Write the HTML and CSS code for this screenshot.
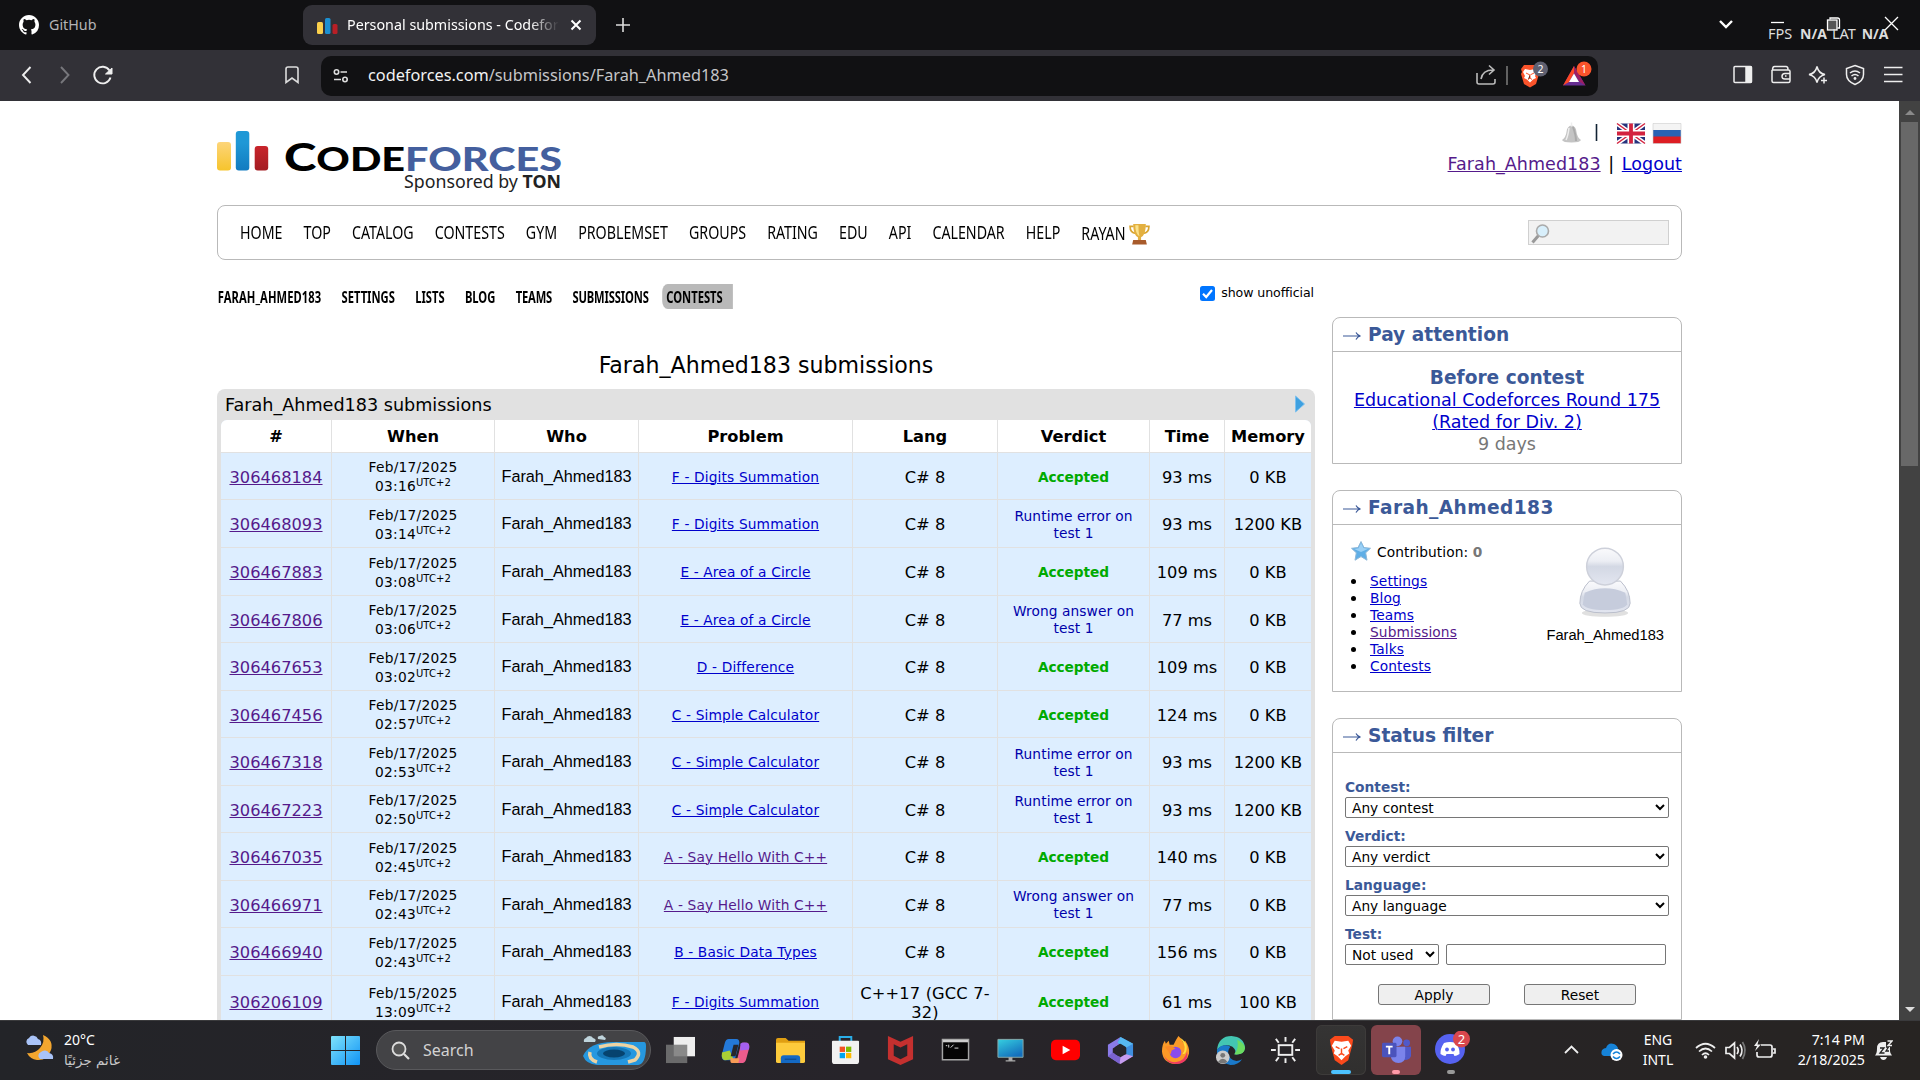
FILE: index.html
```html
<!DOCTYPE html>
<html lang="en">
<head>
<meta charset="utf-8">
<title>Personal submissions - Codeforces</title>
<link rel="stylesheet" href="styles.css">
</head>
<body>
<div class="tabs">
  <svg class="gh" viewBox="0 0 16 16"><path fill="#fff" d="M8 0C3.58 0 0 3.58 0 8c0 3.54 2.29 6.53 5.47 7.59.4.07.55-.17.55-.38 0-.19-.01-.82-.01-1.49-2.01.37-2.53-.49-2.69-.94-.09-.23-.48-.94-.82-1.13-.28-.15-.68-.52-.01-.53.63-.01 1.08.58 1.23.82.72 1.21 1.87.87 2.33.66.07-.52.28-.87.51-1.07-1.78-.2-3.64-.89-3.64-3.95 0-.87.31-1.59.82-2.15-.08-.2-.36-1.02.08-2.12 0 0 .67-.21 2.2.82a7.6 7.6 0 0 1 4 0c1.53-1.04 2.2-.82 2.2-.82.44 1.1.16 1.92.08 2.12.51.56.82 1.27.82 2.15 0 3.07-1.87 3.75-3.65 3.95.29.25.54.73.54 1.48 0 1.07-.01 1.93-.01 2.2 0 .21.15.46.55.38A8 8 0 0 0 16 8c0-4.42-3.58-8-8-8z"/></svg>
  <span class="tab-label">GitHub</span>
  <div class="tab">
    <svg class="fav" viewBox="0 0 21 17"><rect y="4" width="6" height="12" rx="1.5" fill="#fbd04b"/><rect x="8" width="5.500" height="16" rx="1.500" fill="#1c8fd0"/><rect x="15.500" y="6" width="5" height="10" rx="1.500" fill="#b81f26"/></svg>
    <span class="tab-title">Personal submissions - Codefor</span>
    <svg class="x" viewBox="0 0 12 12"><path d="M1.500 1.500l9 9m0-9l-9 9" stroke="#fff" stroke-width="2"/></svg>
  </div>
  <svg class="plus" viewBox="0 0 14 14"><path d="M7 0v14M0 7h14" stroke="#ddd" stroke-width="1.600"/></svg>
  <svg class="caps" viewBox="0 0 190 30"><g fill="none" stroke="#fff" stroke-width="1.300"><path d="M6 11l6 6 6-6" stroke-width="2.400"/><path d="M57 12.500h13"/><path d="M116 9.500V8h7.500q2 0 2 2v8h-2"/><rect x="113.500" y="10" width="9.500" height="10" fill="#555"/><path d="M171 7l13 13m0-13l-13 13"/></g></svg>
  <div class="fps">FPS <b>N/A</b><span>LAT</span> <b>N/A</b></div>
</div>
<div class="toolbar">
  <svg class="navi" viewBox="0 0 100 24"><g fill="none" stroke-width="1.900"><path d="M9.500 4l-7.500 8 7.500 8" stroke="#eee"/><path d="M40 4l7.500 8-7.500 8" stroke="#77777c"/><path d="M88.500 7.500a8.300 8.300 0 1 0 1 7" stroke="#eee"/></g><path d="M91 5v6h-6.500z" fill="#eee" stroke="#eee"/></svg>
  <svg class="bm" viewBox="0 0 14 18"><path d="M3 1h8q2 0 2 2v13.500l-6-4.500-6 4.500V3q0-2 2-2z" fill="none" stroke="#ddd" stroke-width="1.600"/></svg>
  <div class="url">
    <svg class="tune" viewBox="0 0 16 16"><g fill="none" stroke="#ddd" stroke-width="1.600"><circle cx="3.500" cy="4" r="2.200"/><path d="M7.500 4H14M1 11.500h7"/><circle cx="12" cy="11.500" r="2.200"/></g></svg>
    <span class="addr">codeforces.com<i>/submissions/Farah_Ahmed183</i></span>
    <svg class="urlicons" viewBox="0 0 122 30"><g fill="none" stroke="#bbb" stroke-width="1.600"><path d="M1 12v9q0 2 2 2h14q2 0 2-2v-3"/><path d="M5 18c1-6 5-9 12-9M13 4.500l5 4.500-5 4.500"/><path d="M31 5v19" stroke="#777"/></g>
      <path fill="#fb542b" d="M48 4h12l3 4-1 3 1 2-3 10-6 3.500L48 23l-3-10 1-2-1-3z"/><path fill="#fff" d="M49 8l5 1 5-1 2 3-2 4 1 2-3 1.500-3 3-3-3-3-1.500 1-2-2-4z"/><path d="M50 12l3 1.500M58 12l-3 1.500M54 13v4l-2 1.500M54 17l2 1.500" stroke="#fb542b"/>
      <circle cx="64.500" cy="8" r="7.500" fill="#5f6070"/><text x="64.500" y="12" text-anchor="middle" font-size="10.500" fill="#fff">2</text>
      <path d="M98 5l11.500 19.500H87z" fill="#662d91"/><path d="M98 5L87 24.500l6-3.500 5-9z" fill="#ff4724"/><path d="M98 5v7l6 9 5.500 3.500z" fill="#9e1f63"/><path d="M98 12.500l5 8.500h-10z" fill="#fff"/>
      <circle cx="108" cy="8" r="7.500" fill="#fb542b"/><text x="108" y="11.800" text-anchor="middle" font-size="10.500" fill="#fff">1</text></svg>
  </div>
  <svg class="tools" viewBox="0 0 172 22"><g fill="none" stroke="#eee" stroke-width="1.500"><rect x="1" y="2.500" width="17.500" height="16" rx="1"/><path d="M13 3h5v15h-5z" fill="#eee"/><path d="M39 6V17q0 1.500 1.500 1.500h15q1.500 0 1.500-1.500V7.500q0-1.500-1.500-1.500H39.500q0-3.500 2-3.500H53q2 0 2 3"/><path d="M57 9.500h-5q-3 0-3 2.800t3 2.700h5M52 12h1.500"/><path d="M84 2.500q1.500 7 8 8-6.500 1.500-8 8-1.500-6.500-8-8 6.500-1 8-8z"/><path d="M91 13.500v6M88 16.500h6"/><path d="M122 1.500l8.500 3v6q0 6.500-8.500 10-8.500-3.500-8.500-10v-6z"/><path d="M117 9q5-4 10 0M118.500 12q3.500-3 7 0"/><path d="M151 3.500h18.500M151 10.500h18.500M151 17.500h18.500"/></g><circle cx="122" cy="14.500" r="1.400" fill="#eee"/></svg>
</div>
<div class="view">
<div class="page">
  <header class="head">
    <svg class="logo" viewBox="0 0 350 70"><defs><linearGradient id="y" x2="0" y2="1"><stop stop-color="#fdd57a"/><stop offset="1" stop-color="#f6c42c"/></linearGradient><linearGradient id="b" x2="0" y2="1"><stop offset=".3" stop-color="#1f98d6"/><stop offset="1" stop-color="#127bc0"/></linearGradient><linearGradient id="r" x2="0" y2="1"><stop stop-color="#c8242b"/><stop offset="1" stop-color="#a31c22"/></linearGradient></defs>
      <rect y="12" width="14" height="28.500" rx="3" fill="url(#y)"/><rect x="18.800" y="1" width="13.500" height="39.500" rx="3" fill="url(#b)"/><rect x="37.700" y="16" width="13.500" height="24.500" rx="3" fill="url(#r)"/>
      <text class="word" x="67" y="40.500" font-size="32" textLength="278" lengthAdjust="spacingAndGlyphs"><tspan font-size="38">C</tspan>ODE<tspan fill="#445f9e">FORCES</tspan></text>
      <text x="187" y="57.500" font-size="17.500" class="spons" textLength="157" lengthAdjust="spacingAndGlyphs" fill="#222">Sponsored by <tspan font-weight="700">TON</tspan></text></svg>
    <div class="user">
      <svg class="flags" viewBox="0 0 122 24"><path d="M1 19q4-3 4.500-8Q6 5 10.500 4.500 15 5 15.500 11q.5 5 4.500 8-1 2.500-9.500 2.500T1 19z" fill="#c4c4c4"/><path d="M10.500 1.500v4M8 7q-1 8-3 12" stroke="#eee" stroke-width="1.500" fill="none"/><path d="M12 6q3 8 3 14" stroke="#aaa" stroke-width="2" fill="none"/><path d="M35.500 3v17" stroke="#123" stroke-width="1.600"/>
        <rect x="56" y="2.500" width="28" height="20" fill="#27327c"/><path d="M56 2.500l28 20m0-20l-28 20" stroke="#fff" stroke-width="4.500"/><path d="M56 2.500l28 20m0-20l-28 20" stroke="#d3233f" stroke-width="1.500"/><path d="M70 2.500v20M56 12.500h28" stroke="#fff" stroke-width="7"/><path d="M70 2.500v20M56 12.500h28" stroke="#d3233f" stroke-width="3.800"/>
        <path d="M92 2.500h28v7H92z" fill="#f4f4f4"/><path d="M92 9h28v7H92z" fill="#2a62b4"/><path d="M92 15.500h28v7H92z" fill="#dd1d23"/><path d="M92 2.500h28v20H92z" fill="none" stroke="#ccc" stroke-width=".6"/></svg>
      <div class="who"><a class="v">Farah_Ahmed183</a> | <a>Logout</a></div>
    </div>
  </header>
  <nav class="menu">
    <div class="items"><span>HOME</span><span>TOP</span><span>CATALOG</span><span>CONTESTS</span><span>GYM</span><span>PROBLEMSET</span><span>GROUPS</span><span>RATING</span><span>EDU</span><span>API</span><span>CALENDAR</span><span>HELP</span><span class="low">RAYAN</span></div>
    <svg class="cup" viewBox="0 0 20 20" preserveAspectRatio="none"><path d="M4.500 3H1q0 6 5.500 6.500M15.500 3H19q0 6-5.500 6.500" fill="none" stroke="#d9a531" stroke-width="1.600"/><path d="M4 1h12q0 10-4.500 12v3h-3v-3Q4 11 4 1z" fill="#e3b040"/><path d="M6 2h3q0 7 1 10-4-2-4-10z" fill="#fbe28a"/><path d="M4 15.500h12l1 4H3z" fill="#a85b2b"/></svg>
    <div class="find"><svg viewBox="0 0 20 20"><path d="M1.500 19l6-7" stroke="#999" stroke-width="3"/><circle cx="11.500" cy="7.500" r="6" fill="#d8effb" stroke="#aaa" stroke-width="1.600"/></svg></div>
  </nav>
  <div class="cols">
  <main>
    <div class="sub">
      <div class="items2"><span class="wide">FARAH_AHMED183</span><span>SETTINGS</span><span>LISTS</span><span>BLOG</span><span class="tight">TEAMS</span><span class="tight">SUBMISSIONS</span><span class="on">CONTESTS</span></div>
      <label class="unoff"><svg viewBox="0 0 15 15"><rect width="15" height="15" rx="2.500" fill="#0075ff"/><path d="M3 7.800l3.200 3.200L12 4" fill="none" stroke="#fff" stroke-width="2.200"/></svg><span>show unofficial</span></label>
    </div>
    <h1>Farah_Ahmed183 submissions</h1>
    <section class="data">
      <div class="cap"><span>Farah_Ahmed183 submissions</span><svg viewBox="0 0 10 18"><path d="M.5 1L9.500 9 .5 17z" fill="#3ea0e0" stroke="#7cc0ee"/></svg></div>
      <table>
        <colgroup><col class="c1"><col class="c2"><col class="c3"><col class="c4"><col class="c5"><col class="c6"><col class="c7"><col class="c8"></colgroup>
        <thead><tr><th>#</th><th>When</th><th>Who</th><th>Problem</th><th>Lang</th><th>Verdict</th><th>Time</th><th>Memory</th></tr></thead>
        <tbody>
        <tr><td><a class="v">306468184</a></td><td class="d">Feb/17/2025<br>03:16<sup>UTC+2</sup></td><td class="w">Farah_Ahmed183</td><td class="p"><a>F - Digits Summation</a></td><td>C# 8</td><td class="ok">Accepted</td><td>93 ms</td><td>0 KB</td></tr>
        <tr><td><a class="v">306468093</a></td><td class="d">Feb/17/2025<br>03:14<sup>UTC+2</sup></td><td class="w">Farah_Ahmed183</td><td class="p"><a>F - Digits Summation</a></td><td>C# 8</td><td class="no">Runtime error on<br>test 1</td><td>93 ms</td><td>1200 KB</td></tr>
        <tr><td><a class="v">306467883</a></td><td class="d">Feb/17/2025<br>03:08<sup>UTC+2</sup></td><td class="w">Farah_Ahmed183</td><td class="p"><a>E - Area of a Circle</a></td><td>C# 8</td><td class="ok">Accepted</td><td>109 ms</td><td>0 KB</td></tr>
        <tr><td><a class="v">306467806</a></td><td class="d">Feb/17/2025<br>03:06<sup>UTC+2</sup></td><td class="w">Farah_Ahmed183</td><td class="p"><a>E - Area of a Circle</a></td><td>C# 8</td><td class="no">Wrong answer on<br>test 1</td><td>77 ms</td><td>0 KB</td></tr>
        <tr><td><a class="v">306467653</a></td><td class="d">Feb/17/2025<br>03:02<sup>UTC+2</sup></td><td class="w">Farah_Ahmed183</td><td class="p"><a>D - Difference</a></td><td>C# 8</td><td class="ok">Accepted</td><td>109 ms</td><td>0 KB</td></tr>
        <tr><td><a class="v">306467456</a></td><td class="d">Feb/17/2025<br>02:57<sup>UTC+2</sup></td><td class="w">Farah_Ahmed183</td><td class="p"><a>C - Simple Calculator</a></td><td>C# 8</td><td class="ok">Accepted</td><td>124 ms</td><td>0 KB</td></tr>
        <tr><td><a class="v">306467318</a></td><td class="d">Feb/17/2025<br>02:53<sup>UTC+2</sup></td><td class="w">Farah_Ahmed183</td><td class="p"><a>C - Simple Calculator</a></td><td>C# 8</td><td class="no">Runtime error on<br>test 1</td><td>93 ms</td><td>1200 KB</td></tr>
        <tr><td><a class="v">306467223</a></td><td class="d">Feb/17/2025<br>02:50<sup>UTC+2</sup></td><td class="w">Farah_Ahmed183</td><td class="p"><a>C - Simple Calculator</a></td><td>C# 8</td><td class="no">Runtime error on<br>test 1</td><td>93 ms</td><td>1200 KB</td></tr>
        <tr><td><a class="v">306467035</a></td><td class="d">Feb/17/2025<br>02:45<sup>UTC+2</sup></td><td class="w">Farah_Ahmed183</td><td class="p"><a class="v">A - Say Hello With C++</a></td><td>C# 8</td><td class="ok">Accepted</td><td>140 ms</td><td>0 KB</td></tr>
        <tr><td><a class="v">306466971</a></td><td class="d">Feb/17/2025<br>02:43<sup>UTC+2</sup></td><td class="w">Farah_Ahmed183</td><td class="p"><a class="v">A - Say Hello With C++</a></td><td>C# 8</td><td class="no">Wrong answer on<br>test 1</td><td>77 ms</td><td>0 KB</td></tr>
        <tr><td><a class="v">306466940</a></td><td class="d">Feb/17/2025<br>02:43<sup>UTC+2</sup></td><td class="w">Farah_Ahmed183</td><td class="p"><a>B - Basic Data Types</a></td><td>C# 8</td><td class="ok">Accepted</td><td>156 ms</td><td>0 KB</td></tr>
        <tr class="tall"><td><a class="v">306206109</a></td><td class="d">Feb/15/2025<br>13:09<sup>UTC+2</sup></td><td class="w">Farah_Ahmed183</td><td class="p"><a>F - Digits Summation</a></td><td class="l">C++17 (GCC 7-<br>32)</td><td class="ok">Accepted</td><td>61 ms</td><td>100 KB</td></tr>
        </tbody>
      </table>
    </section>
  </main>
  <aside>
    <section class="box b1"><h2><svg viewBox="0 0 19 10"><path d="M0 5h17M13 1.500q1.500 3 4.500 3.500-3 .5-4.500 3.500" fill="none" stroke="#3b5998" stroke-width="1.200"/></svg>Pay attention</h2>
      <div class="soon"><b>Before contest</b><a>Educational Codeforces Round 175</a><a>(Rated for Div. 2)</a><span>9 days</span></div></section>
    <section class="box b2"><h2><svg viewBox="0 0 19 10"><path d="M0 5h17M13 1.500q1.500 3 4.500 3.500-3 .5-4.500 3.500" fill="none" stroke="#3b5998" stroke-width="1.200"/></svg><span class="name">Farah_Ahmed183</span></h2>
      <div class="prof"><div>
        <p><svg viewBox="0 0 20 20"><path d="M10 .5l3 6 6.500.8-4.800 4.500 1.300 7.400-6-3.600-6 3.600 1.300-7.400L.5 7.300 7 6.500z" fill="#5faee6" stroke="#8fb8d8"/><path d="M10 2l2.500 5 5 .8L10 11 3 8l4.500-.8z" fill="#9bd0f5"/></svg>Contribution: <b>0</b></p>
        <ul><li><a>Settings</a></li><li><a>Blog</a></li><li><a>Teams</a></li><li><a class="v">Submissions</a></li><li><a>Talks</a></li><li><a>Contests</a></li></ul></div>
        <figure><svg viewBox="0 0 60 76"><defs><linearGradient id="g" x2="0" y2="1"><stop stop-color="#fafafc"/><stop offset=".35" stop-color="#eceef4"/><stop offset=".5" stop-color="#d3d8e4"/><stop offset="1" stop-color="#e3e6f0"/></linearGradient></defs><ellipse cx="30" cy="69" rx="24" ry="4" fill="#ccc" opacity=".6"/><path d="M14 36q-10 10-10 23 0 10 26 10t26-10q0-13-10-23z" fill="url(#g)" stroke="#b9bdca"/><path d="M9 48q21-9 42 0l2 12q-3 6-23 6T7 60z" fill="#c6ccdc"/><circle cx="30" cy="21" r="19" fill="url(#g)" stroke="#cdd0da" stroke-width="1.500"/></svg><figcaption>Farah_Ahmed183</figcaption></figure></div></section>
    <section class="box b3"><h2><svg viewBox="0 0 19 10"><path d="M0 5h17M13 1.500q1.500 3 4.500 3.500-3 .5-4.500 3.500" fill="none" stroke="#3b5998" stroke-width="1.200"/></svg>Status filter</h2>
      <form><label>Contest:</label><select><option>Any contest</option></select><label>Verdict:</label><select><option>Any verdict</option></select><label>Language:</label><select><option>Any language</option></select><label>Test:</label>
      <div class="test"><select><option>Not used</option></select><input type="text"></div>
      <div class="btns"><button type="button">Apply</button><button type="button">Reset</button></div></form></section>
  </aside>
  </div>
</div>
<div class="scroll"><svg viewBox="0 0 10 5"><path d="M0 5l5-5 5 5z" fill="#8a8a8a"/></svg><div class="thumb"></div><svg viewBox="0 0 10 5"><path d="M0 0l5 5 5-5z" fill="#ddd"/></svg></div>
</div>
<footer class="task">
  <svg class="wx" viewBox="0 0 30 30"><path d="M19 2q11 5 8 15-4 11-14 10Q6 26 3 20q8 1 13-5t3-13z" fill="#f3a62f"/><path d="M4 12a4 4 0 0 1 1-7 5 5 0 0 1 9 1q4 1 3 6zM16 26a4 4 0 0 1 1-7 5 5 0 0 1 8 1q5 1 4 6z" fill="#a9c3f7"/></svg>
  <div class="wt"><span>20°C</span><span class="ar" dir="rtl">غائم جزئيًا</span></div>
  <svg class="win" viewBox="0 0 29 29"><defs><linearGradient id="w" x2="1" y2="1"><stop stop-color="#7fe3fb"/><stop offset="1" stop-color="#1093f5"/></linearGradient></defs><path fill="url(#w)" d="M1 0h13v14H0V1q0-1 1-1zM15 0h13q1 0 1 1v13H15zM0 15h14v14H1q-1 0-1-1zM15 15h14v13q0 1-1 1H15z"/></svg>
  <div class="search"><svg class="lens" viewBox="0 0 19 19"><circle cx="8" cy="8" r="6.500" fill="#555" stroke="#ddd" stroke-width="1.800"/><path d="M13 13l5 5" stroke="#ddd" stroke-width="2.200"/></svg><span>Search</span>
    <svg class="hole" viewBox="0 0 66 32"><path d="M3 8a3 3 0 0 1 2-4 4 4 0 0 1 7 0q4 1 2 4zM17 5q-1-3 2-3 3-2 4 1 3 1 1 3z" fill="#bfd4dc"/><path d="M2 22Q8 8 32 8h31q2 0 2 4 0 18-8 19H16Q5 30 2 22z" fill="#2698e0"/><path d="M9 18q-2 7 7 10M18 13q18-5 34 0 10 5 2 13l-7 2" fill="none" stroke="#ecd3a3" stroke-width="3.500"/><ellipse cx="33" cy="19.500" rx="17" ry="6.500" fill="#1576b6"/><ellipse cx="33" cy="19.500" rx="11" ry="4" fill="#06436f"/></svg></div>
  <div class="apps">
    <span><svg viewBox="0 0 30 30"><path d="M8 1h22v20H8z" fill="#eee"/><path d="M0 9h22v19H0z" fill="#777" opacity=".85"/></svg></span>
    <span><svg viewBox="0 0 30 30"><path d="M8 3h8q3 0 3 4l-4 15q-1 3-4 3H3q-3-1-2-6L4 7q1-4 4-4z" fill="#2479d8"/><path d="M1 17l8-2 4 9-9 1q-4-1-3-8z" fill="#a9cf35"/><path d="M22 7h5q3 1 2 6l-3 11q-1 4-5 4h-9q4-1 5-5l3-12z" fill="#ec5c8c"/><path d="M20 8q2-2 7-1 3 1 2 7l-9 1z" fill="#a55ff0"/><path d="M10 23h9l-1 5h-7q-2-1-1-5z" fill="#f79b56"/><path d="M13 9h5l-3 12h-5z" fill="#26262a"/></svg></span>
    <span><svg viewBox="0 0 30 30"><path d="M0 4q0-2 2-2h8l3 3h17v10H0z" fill="#e09f12"/><path d="M0 7h30v19q0 2-2 2H2q-2 0-2-2z" fill="#fdcb3c"/><path d="M5 28v-5q0-3 3-3h14q3 0 3 3v5z" fill="#1469c4"/><path d="M9 24h12" stroke="#0a4484"/></svg></span>
    <span><svg viewBox="0 0 30 30"><path d="M9 6V1h12v5" fill="none" stroke="#2aaee8" stroke-width="2"/><path d="M1 6q0-1 1-1h26q1 0 1 1v20q0 3-3 3H4q-3 0-3-3z" fill="#f1f1f1"/><path d="M9 11h5.500v5.500H9z" fill="#f25022"/><path d="M15.500 11H21v5.500h-5.500z" fill="#7fba00"/><path d="M9 17.500h5.500V23H9z" fill="#00a4ef"/><path d="M15.500 17.500H21V23h-5.500z" fill="#ffb900"/></svg></span>
    <span><svg viewBox="0 0 30 30"><path d="M2 0l13 6 13-6v24l-13 6-13-6zM8 8.500v12l7 3.500 7-3.500v-12L15 12z" fill="#c4302f" fill-rule="evenodd"/></svg></span>
    <span><svg viewBox="0 0 30 30"><path d="M1.500 3.500h27v21h-27z" fill="#050505" stroke="#a5a5a5" stroke-width="1.500"/><path d="M2 4h26v2.500H2z" fill="#ccc"/><path d="M5 10h1.500M8 9v3M10 12l3-3M14 12.500h4" stroke="#ddd"/></svg></span>
    <span><svg viewBox="0 0 30 30"><defs><linearGradient id="m" x2=".6" y2="1"><stop stop-color="#35cfe0"/><stop offset="1" stop-color="#146fbd"/></linearGradient></defs><path d="M2 3.500h26V22H2z" fill="url(#m)" stroke="#8aa" /><path d="M13 22h4v3h3v1.500H10V25h3z" fill="#aaa"/></svg></span>
    <span><svg viewBox="0 0 30 30"><rect y="4" width="30" height="21" rx="5" fill="#f00"/><path d="M12 10l8 4.500-8 4.500z" fill="#fff"/></svg></span>
    <span><svg viewBox="0 0 30 30"><path d="M15 1L2 9v12l5 3V13l9-6z" fill="#8a7be8"/><path d="M15 1l13 7v13l-7 3V12l-9-5z" fill="#3f8ede"/><path d="M15 1l13 7-7 4-9-5z" fill="#57b8f0"/><path d="M7 24l8-4 6-1 7 2-13 8z" fill="#c69cf0"/><path d="M2 21l5-4 8 5-1 7z" fill="#7a62cf"/><path d="M9.500 11.500l5.500-3.500 5.500 3.500v7L15 22l-5.500-3.500z" fill="#27252a"/></svg></span>
    <span><svg viewBox="0 0 30 30"><path d="M18 0q4 3 5 7l2-2q5 7 4 13-2 10-14 11Q2 28 1 16 1 9 4 5l1 3 3-3 1 4h4q3-6 5-9z" fill="#fb9a27"/><path d="M3 20q4 8 13 7 9-2 11-11 2 12-11 13Q6 29 3 20z" fill="#ef3a63"/><path d="M20 2q8 10 2 17l3-1Q30 8 20 2z" fill="#ffdf41"/><circle cx="15" cy="17" r="6" fill="#8a4bea"/><path d="M4 11l6-1 5 3-4 2-1 4z" fill="#fb8a27"/></svg></span>
    <span><svg viewBox="0 0 30 30"><path d="M1 14Q3 0 16 0q13 1 14 12-1 8-11 7 3-4-2-8-9-4-16 3z" fill="#43c6b2"/><path d="M22 4q8 4 8 9-1 7-11 6 5-6 3-15z" fill="#6bdc61"/><path d="M1 14q6-7 14-3-5 5 0 12 5 5 12 1-4 6-12 6Q0 27 1 14z" fill="#1a79ca"/><circle cx="7" cy="22" r="7" fill="#ccc"/><circle cx="7" cy="20" r="2.500" fill="#777"/><path d="M2 27q5-7 10 0-5 3-10 0z" fill="#777"/></svg></span>
    <span><svg viewBox="0 0 30 30"><g fill="none" stroke="#eee" stroke-width="2"><rect x="8" y="9.500" width="14" height="10"/><path d="M15 1v5M15 23v5M0 14.500h5M25 14.500h5M5 3l3 4M25 3l-3 4M5 26l3-4M25 26l-3-4"/></g></svg></span>
    <span class="tile"><svg viewBox="0 0 30 30"><path d="M8 0h14l5 4-1 6-4 15-7 5-7-5L4 10 3 4z" fill="#fb4a1c"/><path d="M8 5l7 1 7-1 3 5-3 5 1 3-4 3-4 4-4-4-4-3 1-3-3-5z" fill="#fff"/><path d="M9 11l4 2M21 11l-4 2M15 13v5l-3 2M15 18l3 2" stroke="#fb4a1c" stroke-width="1.500" fill="none"/></svg></span>
    <span class="tile t"><svg viewBox="0 0 30 30"><circle cx="16" cy="5.500" r="5" fill="#7b83eb"/><circle cx="25.500" cy="7" r="3.500" fill="#5059c9"/><path d="M20 11h10v9q0 5-7 5z" fill="#5059c9"/><path d="M9 11h15v10q0 7-7 7t-8-7z" fill="#7b83eb"/><rect y="7" width="15" height="15" rx="1.500" fill="#4b53bc"/><path d="M4 11h7M7.500 11v8" stroke="#fff" stroke-width="2"/></svg></span>
    <span class="disc"><svg viewBox="0 0 36 34"><ellipse cx="15" cy="18" rx="15" ry="15" fill="#5662f0"/><path d="M9 12q6-2 12 0 4 6 3.500 11-3 2-5 2l-1-2h-7l-1 2q-2 0-5-2Q5 18 9 12z" fill="#fff"/><circle cx="12" cy="18.500" r="1.900" fill="#5662f0"/><circle cx="18" cy="18.500" r="1.900" fill="#5662f0"/><circle cx="26.500" cy="8" r="8.500" fill="#d9474d"/><text x="26.500" y="13" font-size="13" text-anchor="middle" fill="#fff">2</text></svg></span>
  </div>
  <svg class="up" viewBox="0 0 60 24"><path d="M1 15l6.500-6.500L14 15" fill="none" stroke="#eee" stroke-width="1.800"/><path d="M40 18q-4-1-2-6 2-2 4-2 2-6 8-4 4 2 4 5 4 2 3 7z" fill="#1683d8"/><circle cx="52.500" cy="17" r="6" fill="#fff"/><path d="M49 16q3.500-4 7 0M56 18.500q-3.500 4-7 0" stroke="#1683d8" stroke-width="1.500" fill="none"/></svg>
  <div class="lang"><span>ENG</span><span>INTL</span></div>
  <svg class="stat" viewBox="0 0 82 24"><g fill="none" stroke="#eee" stroke-width="1.700"><path d="M1 10q9.500-8.500 19 0M4 13.500q6.500-6 13 0M7 17q3.500-3.500 7 0"/><path d="M31 9.500h3.500l5-4.500v15l-5-4.500H31zM42 9q2.500 3.500 0 7M45 6.500q4 6 0 12"/><path d="M47.500 4q5 8 0 17" stroke="#777"/><path d="M66 7h9q2 0 2 2v8q0 2-2 2H64q-2 0-2-2v-3M78 11h2v4h-2"/></g><path d="M64 1l-5 7h3l-2 5 6-6.500h-3.500z" fill="#eee"/><circle cx="10.500" cy="19" r="1.800" fill="#eee"/></svg>
  <div class="clock"><span>7:14 PM</span><span>2/18/2025</span></div>
  <svg class="zz" viewBox="0 0 18 20"><path d="M0 15.500q2-2 2-7Q2 2 8 2h3v5h4v4q0 2.500 2 4.500zM5 17h7q-1 3-3.500 3T5 17z" fill="#eee"/><path d="M5 8h4l-4 5h4.500M11 7h2.500l-2.500 4h3" stroke="#222" fill="none" stroke-width="1.300"/><path d="M12.500 1H17l-4 4.500h4" stroke="#eee" fill="none" stroke-width="1.400"/></svg>
</footer>
</body>
</html>
```
FILE: styles.css
```css
* { box-sizing: border-box; }
html, body { margin: 0; width: 1920px; height: 1080px; overflow: hidden; }
body { font-family: "DejaVu Sans", sans-serif; font-size: 16.25px; color: #000; background: #fff; display: flex; flex-direction: column; }
svg { display: block; flex: none; }
a { color: #0000cc; text-decoration: underline; text-decoration-thickness: 1px; }
a.v { color: #551a8b; }

/* browser chrome */
.tabs, .toolbar, .task { font-family: "Noto Sans", sans-serif; flex: none; display: flex; align-items: center; }
.tabs { height: 50px; background: #111113; position: relative; }
.gh { width: 20px; height: 20px; margin-left: 19px; }
.tab-label { margin-left: 10px; width: 254px; color: #b4b4b6; font-size: 14.3px; padding-bottom: 2px; }
.tab { width: 293px; height: 40px; border-radius: 9px; background: #323137; display: flex; align-items: center; padding-left: 14px; }
.fav { width: 21px; height: 17px; margin-top: 3px; }
.tab-title { margin-left: 9px; width: 212px; color: #fff; font-size: 14.3px; padding-bottom: 2px; white-space: nowrap; -webkit-mask-image: linear-gradient(90deg, #000 86%, transparent); mask-image: linear-gradient(90deg, #000 86%, transparent); }
.x { width: 12px; height: 12px; margin-left: 11px; }
.plus { width: 14px; height: 14px; margin-left: 20px; }
.caps { width: 190px; height: 30px; margin-left: auto; margin-right: 16px; }
.fps { position: absolute; left: 1768px; top: 22px; font: 14.5px/22px "Noto Sans", sans-serif; color: #ddd; white-space: nowrap; }
.fps b { margin-left: 4px; font-size: 14px; }
.fps span { margin-left: 5px; }
.fps span + b { margin-left: 2px; }

.toolbar { height: 51px; background: #323137; }
.navi { width: 100px; height: 24px; margin-left: 21px; margin-top: -1px; }
.bm { width: 14px; height: 18px; margin-left: 164px; margin-top: -1px; }
.url { margin-left: 22px; width: 1277px; height: 40px; border-radius: 10px; background: #111113; display: flex; align-items: center; }
.tune { width: 16px; height: 16px; margin-left: 12px; }
.addr { margin-left: 19px; color: #f2f2f2; font-size: 16.3px; padding-bottom: 2px; }
.addr i { font-style: normal; color: #c6c6c8; }
.urlicons { width: 122px; height: 30px; margin-left: auto; }
.tools { width: 172px; height: 22px; margin-left: 135px; margin-top: -1px; }

/* page */
.view { flex: none; height: 919px; display: flex; overflow: hidden; }
.page { width: 1899px; padding: 0 217px; flex: none; }
.head { height: 104px; width: 1465px; display: flex; justify-content: space-between; }
.logo { width: 350px; height: 70px; margin-top: 29px; overflow: visible; }
.word { font-family: Lato, sans-serif; font-weight: 900; }
.spons { font-family: "Noto Sans", sans-serif; }
.user { display: flex; flex-direction: column; align-items: flex-end; padding-top: 20px; }
.flags { width: 122px; height: 24px; margin-right: -1px; }
.who { margin-top: 7px; font-size: 17.5px; line-height: 24px; letter-spacing: .05px; word-spacing: 2px; white-space: nowrap; }

.menu { width: 1465px; height: 55px; border: 1px solid #b9b9b9; border-radius: 8px; display: flex; align-items: center; padding: 0 12px 0 22px; }
.items, .items2 { font-family: "Noto Sans", sans-serif; display: flex; white-space: nowrap; transform-origin: 0 50%; }
.items { font-size: 18px; gap: 26.7px; width: 888px; transform: scaleX(.79); flex: none; }
.low { padding-top: 1px; }
.cup { width: 21px; height: 22px; margin-left: 1px; margin-top: 2px; }
.find { margin-left: auto; width: 141px; height: 25px; background: #f2f2f2; border: 1px solid #d0d0d0; padding: 2px; }
.find svg { width: 20px; height: 21px; }

.cols { display: flex; gap: 17px; }
main { width: 1098px; flex: none; }
.sub { display: flex; justify-content: space-between; align-items: center; height: 25px; margin-top: 24px; }
.items2 { font-size: 16px; font-weight: 700; gap: 29px; transform: scaleX(.7); width: 600px; align-items: center; padding-left: 1px; line-height: 23px; }
.items2 span { padding-top: 2px; }
.items2 .wide { letter-spacing: .1px; }
.items2 .tight { letter-spacing: -.2px; }
.items2 .on { background: #b9b9b9; border-radius: 8px 0 0 8px; padding: 2px 14px 0 6px; margin-left: -10px; }
.unoff { display: flex; gap: 6px; font-size: 12.6px; letter-spacing: -.1px; align-items: center; margin-top: -9px; margin-right: 1px; }
.unoff svg { width: 15px; height: 15px; margin-top: 2px; }
h1 { margin: 39px 0 0; height: 41px; font-size: 22.1px; font-weight: 400; text-align: center; line-height: 34px; }
.data { background: #e1e1e1; border-radius: 8px 8px 0 0; padding: 0 4px; height: 700px; }
.cap { height: 31px; display: flex; align-items: center; justify-content: space-between; padding: 0 6px 0 4px; font-size: 17.6px; }
.cap svg { width: 10px; height: 18px; margin-top: -2px; }
table { border-collapse: separate; border-spacing: 0; table-layout: fixed; width: 1090px; background: #def; border-radius: 6px 6px 0 0; overflow: hidden; }
.c1 { width: 111px; } .c2 { width: 163px; } .c3 { width: 144px; } .c4 { width: 214px; }
.c5 { width: 145px; } .c6 { width: 152px; } .c7 { width: 75px; } .c8 { width: 86px; }
th, td { padding: 0; text-align: center; vertical-align: middle; border: 0 solid #e1e1e1; border-width: 0 1px 1px 0; white-space: nowrap; line-height: 19px; background: #def; }
th:last-child, td:last-child { border-right: 0; }
th { height: 33px; background: #fff; }
td { height: 48px; padding-top: 2px; }
tr:nth-child(even) td, tr:first-child td { height: 47px; }
thead tr:first-child th { height: 33px; }
tbody tr:nth-child(2) td { height: 48px; }
tbody tr:nth-child(4) td { height: 47px; }
tr.tall td { height: 52px; }
.d { font-size: 13.75px; letter-spacing: .25px; }
.d sup { font-size: 10px; line-height: 0; vertical-align: 5px; letter-spacing: .1px; }
td.w { font-family: "Liberation Sans", Arial, sans-serif; font-size: 16.25px; padding-top: 0; }
.p { font-size: 13.75px; letter-spacing: .14px; }
.l { letter-spacing: .15px; }
.ok { color: #0a0; font-weight: 700; font-size: 13.75px; letter-spacing: -.1px; }
td.no { color: #0000aa; font-size: 13.75px; line-height: 17px; letter-spacing: .08px; }

/* sidebar */
aside { width: 350px; padding-top: 57px; flex: none; }
.box { border: 1px solid #b9b9b9; border-radius: 8px 8px 0 0; }
.b1 { height: 147px; } .b2 { height: 202px; margin-top: 26px; } .b3 { height: 302px; margin-top: 26px; }
h2 { margin: 0; height: 34px; border-bottom: 1px solid #b9b9b9; font-size: 18.6px; line-height: 32px; color: #3b5998; display: flex; align-items: center; padding-left: 10px; white-space: nowrap; }
h2 svg { width: 19px; height: 10px; margin: 3px 6px 0 0; }
.name { letter-spacing: .4px; }
.soon { display: flex; flex-direction: column; align-items: center; padding-top: 14px; font-size: 17.5px; line-height: 22px; white-space: nowrap; }
.soon b { color: #3b5998; font-size: 18.6px; line-height: 23px; }
.soon span { color: #777; }
.prof { display: flex; justify-content: space-between; padding: 16px 17px 0 18px; font-size: 13.75px; }
.prof p { margin: 0; display: flex; align-items: center; height: 22px; white-space: pre; letter-spacing: .1px; }
.prof p svg { width: 20px; height: 20px; margin: -2px 6px 0 0; }
.prof p b { color: #777; }
.prof ul { margin: 10px 0 0; padding: 0; list-style: none; line-height: 17px; letter-spacing: .1px; }
.prof li { display: flex; align-items: center; gap: 14px; }
.prof li::before { content: ""; width: 5px; height: 5px; border-radius: 50%; background: #000; }
figure { margin: 4px 0 0; display: flex; flex-direction: column; align-items: center; font: 14.7px "Liberation Sans", Arial, sans-serif; }
figure svg { width: 58px; height: 76px; margin-bottom: 6px; }
form { padding: 25px 12px 0; font-size: 13.75px; }
form label { display: block; color: #3b5998; font-weight: 700; line-height: 18px; height: 18px; margin-bottom: 1px; }
select, input { font: 13.75px "DejaVu Sans", sans-serif; width: 324px; height: 21px; border: 1px solid #767676; border-radius: 2px; background: #fff; color: #000; display: block; margin: 0 0 9px; padding: 0 2px; }
.test { display: flex; gap: 7px; }
.test select { width: 94px; }
.test input { width: 220px; }
.btns { display: flex; gap: 34px; padding: 10px 0 0 33px; }
button { width: 112px; height: 21px; font: 13.75px "DejaVu Sans", sans-serif; border: 1px solid #767676; border-radius: 3px; background: #efefef; padding: 0; color: #000; }

.scroll { width: 21px; background: #424242; display: flex; flex-direction: column; align-items: center; flex: none; padding: 9px 0 8px; }
.scroll svg { width: 10px; height: 5px; }
.scroll .thumb { width: 17px; height: 344px; background: #686868; margin: 7px 0 auto; }

/* taskbar */
.task { height: 60px; background: linear-gradient(90deg, #232428, #27242a 45%, #272422); border-top: 1px solid #3a3a3c; color: #fff; }
.wx { width: 30px; height: 30px; margin-left: 24px; margin-top: -5px; }
.wt { margin-left: 10px; width: 267px; display: flex; flex-direction: column; font-size: 14px; line-height: 21px; align-items: flex-start; margin-top: -2px; }
.ar { font-family: "DejaVu Sans", sans-serif; font-size: 13.5px; color: #c8c8c8; white-space: nowrap; }
.win { width: 29px; height: 29px; }
.search { margin-left: 16px; width: 275px; height: 40px; border-radius: 20px; background: #434346; border: 1px solid #59595c; display: flex; align-items: center; padding: 0 3px 0 14px; margin-top: -1px; }
.lens { width: 19px; height: 19px; }
.search span { margin-left: 13px; font-size: 16px; color: #d2d2d2; }
.hole { width: 66px; height: 32px; margin-left: auto; }
.apps { margin-left: 2px; display: flex; margin-top: -1px; }
.apps span { width: 55px; height: 50px; display: flex; align-items: center; justify-content: center; }
.apps span svg { width: 29px; height: 29px; }
.apps .tile { width: 50px; margin-left: 3px; margin-right: 2px; border-radius: 6px; background: linear-gradient(#353434, #302f2e); box-shadow: inset 0 0 0 1px #3d3b3a; position: relative; }
.apps .t { background: #84444b; box-shadow: none; }
.tile::after, .disc::after { content: ""; position: absolute; bottom: 1px; left: 50%; width: 20px; height: 4px; margin-left: -10px; border-radius: 2px; background: #4cc2ff; }
.t::after, .disc::after { width: 8px; margin-left: -4px; background: #ff9aa8; }
.disc { position: relative; }
.disc::after { background: #999; }
.apps .disc svg { width: 36px; height: 34px; margin: -5px 0 0 5px; }
.up { width: 60px; height: 24px; margin-left: 86px; margin-top: -2px; }
.lang { margin-left: 15px; width: 38px; text-align: center; display: flex; flex-direction: column; font-size: 14px; line-height: 20px; margin-top: -1px; }
.stat { width: 82px; height: 24px; margin-left: 18px; margin-top: -2px; }
.clock { margin-left: 10px; width: 78px; display: flex; flex-direction: column; align-items: flex-end; font-size: 14.2px; line-height: 20px; white-space: nowrap; margin-top: -2px; }
.zz { width: 18px; height: 20px; margin-left: 10px; margin-top: -2px; }
```
